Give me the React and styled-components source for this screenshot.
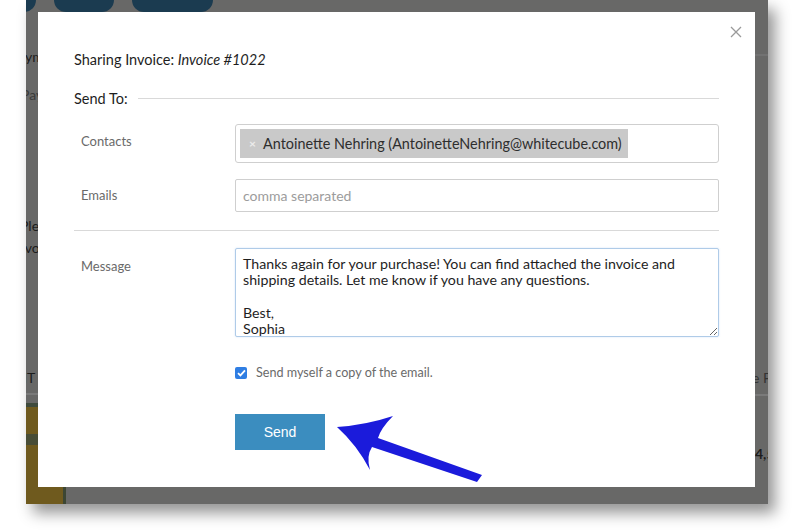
import React from 'react';
import styled, { createGlobalStyle } from 'styled-components';

const GlobalStyle = createGlobalStyle`
  html, body {
    margin: 0;
    padding: 0;
    background: #ffffff;
    font-family: Lato, "Open Sans", sans-serif;
  }
`;

const Page = styled.div`
  position: relative;
  width: 800px;
  height: 530px;
  overflow: hidden;
  background: #ffffff;
`;

const Frame = styled.div`
  position: relative;
  margin-left: 26px;
  width: 742px;
  height: 504px;
  background: #686867;
  overflow: hidden;
  box-shadow: 7px 9px 14px rgba(0, 0, 0, 0.42);
`;

/* the app underneath the modal overlay, dimmed */
const Backdrop = styled.div`
  display: flex;
  flex-direction: column;
  height: 100%;
`;

const TopBar = styled.div`
  display: flex;
  gap: 18px;
  height: 12px;
  margin-left: -14px;
`;

const Pill = styled.div`
  width: ${p => p.w}px;
  height: 12px;
  border-radius: 0 0 12px 12px;
  background: #1b3b50;
`;

const Columns = styled.div`
  flex: 1;
  display: flex;
  justify-content: space-between;
`;

const SideCol = styled.div`
  width: ${p => p.w}px;
  display: flex;
  flex-direction: column;
`;

const Scrap = styled.span`
  margin-top: ${p => p.mt}px;
  margin-left: ${p => p.ml || 0}px;
  font-size: 14px;
  font-weight: ${p => (p.bold ? 700 : 400)};
  color: ${p => p.color || '#1c1c1c'};
  line-height: 16px;
  white-space: nowrap;
`;

const Rule = styled.div`
  margin-top: ${p => p.mt}px;
  height: 2px;
  background: ${p => p.color || '#7a7a7a'};
`;

const YellowTile = styled.div`
  margin-top: ${p => p.mt}px;
  flex: 1;
  width: 40px;
  background: #6f5a1e;
  border-top: 4px solid #3e4a3c;
  border-right: 3px solid #3c4633;
  box-sizing: border-box;
  display: flex;
  flex-direction: column;

  &::after {
    content: '';
    margin-top: 27px;
    height: 11px;
    background: #3e4a3c;
    opacity: 0.8;
  }
`;

const Modal = styled.div`
  position: absolute;
  left: 12px;
  top: 12px;
  width: 717px;
  height: 475px;
  background: #ffffff;
  padding: 38px 36px 0 36px;
  box-sizing: border-box;
  color: #1e1e1e;
`;

const Close = styled.button`
  position: absolute;
  top: 13px;
  right: 12px;
  width: 14px;
  height: 14px;
  padding: 0;
  border: none;
  background: none;
  display: flex;
`;

const Title = styled.h2`
  margin: 0;
  font-size: 14.5px;
  font-weight: 400;
  line-height: 20px;
  color: #1e1e1e;

  em { font-style: italic; }
`;

const SendTo = styled.div`
  display: flex;
  align-items: center;
  gap: 10px;
  margin-top: 18px;
  height: 20px;
  font-size: 14.5px;

  &::after {
    content: '';
    flex: 1;
    height: 1px;
    background: #d9d9d9;
  }
`;

const FieldRow = styled.div`
  display: grid;
  grid-template-columns: 161px 1fr;
  margin-top: ${p => p.mt || 16}px;
`;

const Label = styled.label`
  padding-left: 7px;
  padding-top: ${p => p.pt || 9}px;
  font-size: 13px;
  line-height: 16px;
  color: #6a6a6a;
`;

const Box = styled.div`
  height: ${p => p.h}px;
  border: 1px solid #cfcfcf;
  border-radius: 3px;
  box-sizing: border-box;
  display: flex;
  align-items: center;
  padding: 0 4px;
  background: #ffffff;
`;

const Chip = styled.span`
  display: inline-flex;
  align-items: center;
  gap: 6px;
  height: 29px;
  padding: 0 6px 0 9px;
  background: #c9c9c9;
  font-size: 14.4px;
  color: #2e2e2e;
`;

const ChipX = styled.span`
  font-size: 12px;
  font-weight: 700;
  color: #ececec;
  width: 8px;
`;

const Input = styled.input`
  width: 100%;
  height: 33px;
  border: 1px solid #cfcfcf;
  border-radius: 2px;
  box-sizing: border-box;
  padding: 0 7px;
  font-family: Lato, sans-serif;
  font-size: 14px;
  color: #333;
  outline: none;

  &::placeholder { color: #9c9c9c; }
`;

const Divider = styled.hr`
  margin: 18px 0 0;
  border: none;
  height: 1px;
  background: #d9d9d9;
`;

const Message = styled.textarea`
  width: 100%;
  height: 89px;
  box-sizing: border-box;
  border: 1px solid #afcbe8;
  border-radius: 2px;
  padding: 7px 7px;
  font-family: Lato, sans-serif;
  font-size: 14.2px;
  line-height: 16.3px;
  color: #1e1e1e;
  overflow: hidden;
  outline: none;
  box-shadow: 0 0 2px rgba(120, 170, 230, 0.35);
`;

const CheckRow = styled.div`
  display: flex;
  align-items: center;
  gap: 9px;
  margin: 28px 0 0 161px;
  font-size: 12.6px;
  color: #6a6a6a;
`;

const Check = styled.span`
  width: 12px;
  height: 12px;
  border-radius: 2px;
  background: #2f7ee3;
  display: flex;
  align-items: center;
  justify-content: center;
`;

const SendButton = styled.button`
  display: block;
  margin: 34px 0 0 161px;
  width: 90px;
  height: 36px;
  border: none;
  background: #3b8dbf;
  color: #ffffff;
  font-family: "Liberation Sans", Arial, sans-serif;
  font-size: 14px;
`;

const Annotation = styled.svg`
  position: absolute;
  left: 0;
  top: 0;
  pointer-events: none;
`;

export default function App() {
  return (
    <Page>
      <GlobalStyle />
      <Frame>
        <Backdrop>
          <TopBar>
            <Pill w={24} />
            <Pill w={60} />
            <Pill w={81} />
          </TopBar>
          <Columns>
            <SideCol w={40}>
              <Scrap mt={37} ml={-16}>Paym</Scrap>
              <Scrap mt={22} ml={-5} color="#3a3a3a">Pay</Scrap>
              <Scrap mt={115} ml={-6}>Ple</Scrap>
              <Scrap mt={6} ml={-9}>nvo</Scrap>
              <Scrap mt={114} ml={-3}>IT</Scrap>
              <Rule mt={7} />
              <YellowTile mt={8} />
            </SideCol>
            <SideCol w={17}>
              <Rule mt={42} color="#727272" />
              <Scrap mt={314} ml={1} color="#333">e F</Scrap>
              <Rule mt={8} />
              <Scrap mt={50} ml={4} bold>4,5</Scrap>
            </SideCol>
          </Columns>
        </Backdrop>

        <Modal>
          <Close aria-label="close">
            <svg width="14" height="14" viewBox="0 0 14 14">
              <path d="M2 2 L12 12 M12 2 L2 12" stroke="#9a9a9a" strokeWidth="1.3" />
            </svg>
          </Close>
          <Title>Sharing Invoice: <em>Invoice #1022</em></Title>
          <SendTo>Send To:</SendTo>

          <FieldRow mt={16}>
            <Label>Contacts</Label>
            <Box h={39}>
              <Chip>
                <ChipX>×</ChipX>
                Antoinette Nehring (AntoinetteNehring@whitecube.com)
              </Chip>
            </Box>
          </FieldRow>

          <FieldRow mt={16}>
            <Label pt={8}>Emails</Label>
            <Input placeholder="comma separated" />
          </FieldRow>

          <Divider />

          <FieldRow mt={17}>
            <Label pt={10}>Message</Label>
            <Message
              readOnly
              value={'Thanks again for your purchase! You can find attached the invoice and\nshipping details. Let me know if you have any questions.\n\nBest,\nSophia'}
            />
          </FieldRow>

          <CheckRow>
            <Check>
              <svg width="9" height="8" viewBox="0 0 9 8">
                <path d="M1 4.2 L3.4 6.4 L8 1.4" stroke="#fff" strokeWidth="1.8" fill="none" />
              </svg>
            </Check>
            Send myself a copy of the email.
          </CheckRow>

          <SendButton>Send</SendButton>
        </Modal>
      </Frame>

      <Annotation width="800" height="530" viewBox="0 0 800 530">
        <path
          d="M337 427 Q366 425 393 416 Q381 428 378 438 L482 475 L477 482 L372 447 Q366 456 370 470 Q357 445 337 427 Z"
          fill="#1b1bdb"
        />
      </Annotation>
    </Page>
  );
}
